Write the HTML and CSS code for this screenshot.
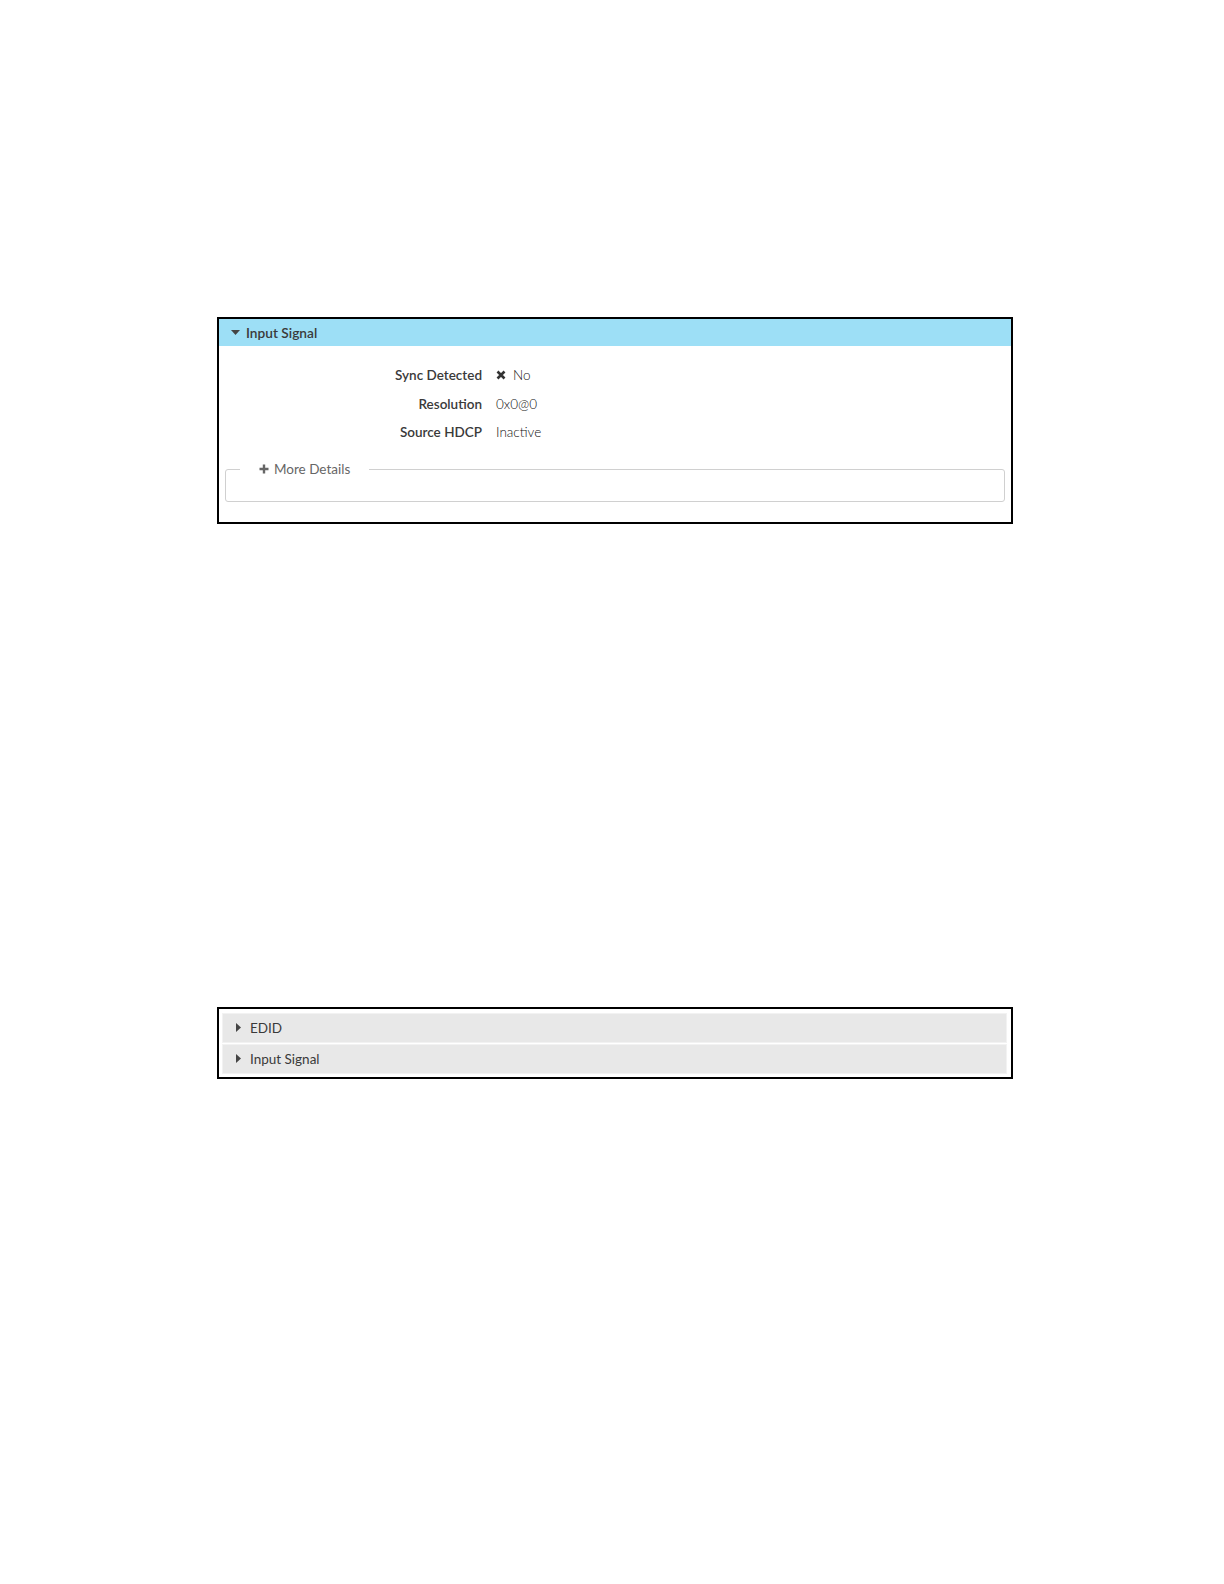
FILE: index.html
```html
<!DOCTYPE html>
<html>
<head>
<meta charset="utf-8">
<link rel="stylesheet" href="styles.css">
</head>
<body>
<div class="page">
  <section class="panel">
    <div class="panel-head">
      <svg class="caret-down" width="9" height="5" viewBox="0 0 9 5"><path d="M0 0H9L4.5 5Z" fill="#444"/></svg>
      <span>Input Signal</span>
    </div>
    <div class="panel-body">
      <div class="row"><div class="label">Sync Detected</div><div class="value"><svg class="x-icon" width="10" height="10" viewBox="0 0 10 10"><path d="M1.5 1.5L8.5 8.5M8.5 1.5L1.5 8.5" stroke="#333" stroke-width="2.6" stroke-linecap="butt"/></svg>No</div></div>
      <div class="row"><div class="label">Resolution</div><div class="value">0x0@0</div></div>
      <div class="row"><div class="label">Source HDCP</div><div class="value">Inactive</div></div>
      <fieldset class="more">
        <legend><svg class="plus" width="10" height="10" viewBox="0 0 10 10"><path d="M5 0.5V9.5M0.5 5H9.5" stroke="#666" stroke-width="2.4"/></svg>More Details</legend>
        <div class="more-body"></div>
      </fieldset>
    </div>
  </section>

  <section class="panel panel-list">
    <div class="item"><svg class="caret-right" width="5" height="9" viewBox="0 0 5 9"><path d="M0 0V9L5 4.5Z" fill="#444"/></svg><span>EDID</span></div>
    <div class="item"><svg class="caret-right" width="5" height="9" viewBox="0 0 5 9"><path d="M0 0V9L5 4.5Z" fill="#444"/></svg><span>Input Signal</span></div>
  </section>
</div>
</body>
</html>
```

FILE: styles.css
```css
html, body {
  margin: 0;
  padding: 0;
  background: #fff;
}
.page {
  padding: 317px 0 0 217px;
  font-family: Lato, "Open Sans", sans-serif;
  color: #333;
}
.panel {
  box-sizing: border-box;
  width: 796px;
  border: 2px solid #000;
}
.panel-head {
  height: 27px;
  background: #9ddff6;
  display: flex;
  align-items: center;
  padding-left: 12px;
  font-size: 13.7px;
  font-weight: 600;
  color: #3a3a3a;
}
.caret-down {
  margin-right: 6px;
}
.panel-body {
  padding: 15px 6px 20px 6px;
}
.row {
  display: flex;
  height: 28.5px;
  align-items: center;
  font-size: 13.5px;
}
.label {
  width: 257px;
  text-align: right;
  font-weight: 600;
  color: #3a3a3a;
}
.value {
  margin-left: 14px;
  display: flex;
  align-items: center;
  font-weight: 300;
  color: #111;
}
.x-icon {
  margin-right: 7px;
}
.more {
  margin: 14px 0 0 0;
  padding: 0;
  border: 1px solid #d0d0d0;
  border-radius: 3px;
}
.more legend {
  margin-left: 14px;
  padding: 0 19px 0 19px;
  font-size: 13.5px;
  line-height: 17px;
  color: #666;
  display: flex;
  align-items: center;
}
.more-body {
  height: 23px;
}
.plus {
  margin-right: 5px;
}
.panel-list {
  margin-top: 483px;
  padding: 4px 4px 3px 3px;
}
.item {
  height: 30px;
  background: #e8e8e8;
  border: 1px solid #f2f2f2;
  box-sizing: border-box;
  display: flex;
  align-items: center;
  padding-left: 13px;
  font-size: 13.5px;
  color: #3a3a3a;
}
.item + .item {
  margin-top: 1px;
}
.caret-right {
  margin-right: 9px;
}
```
